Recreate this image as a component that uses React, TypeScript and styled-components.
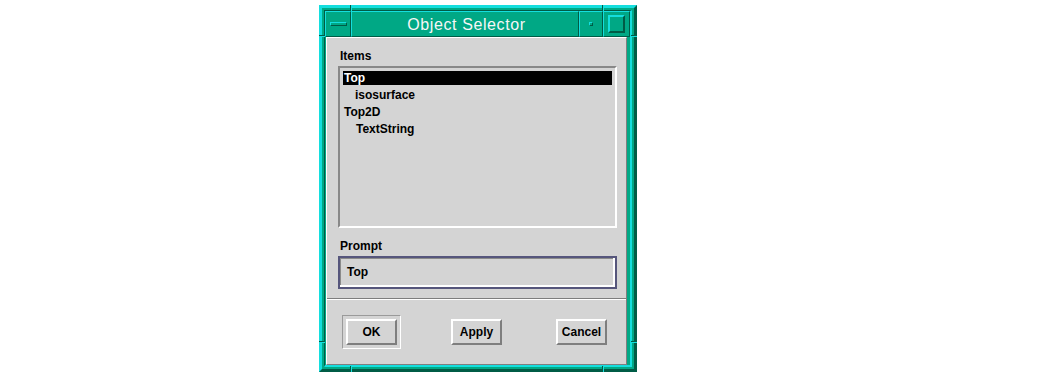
import { createGlobalStyle, styled } from "styled-components";

const TEAL = "#00a885";
const LIGHT = "#14dede";
const DARK = "#005c46";
const GREY = "#d4d4d4";
const SHADOW = "#7e7e7e";

const GlobalStyle = createGlobalStyle`
  html, body {
    margin: 0;
    background: #ffffff;
  }
  body {
    font-family: "Liberation Sans", Arial, sans-serif;
  }
`;

const Page = styled.div`
  height: 376px;
  box-sizing: border-box;
  padding: 5px 0 0 319px;
`;

// mwm style window frame
const Frame = styled.div`
  position: relative;
  width: 318px;
  height: 367px;
  box-sizing: border-box;
  display: flex;
  padding: 2px;
  background: ${TEAL};
  border: 3px solid;
  border-color: ${LIGHT} ${DARK} ${DARK} ${LIGHT};
`;

const Tick = styled.span<{ $side: "top" | "bottom" | "left" | "right"; $at: number }>`
  position: absolute;
  box-sizing: border-box;
  ${({ $side, $at }) =>
    $side === "top" || $side === "bottom"
      ? `
    ${$side}: -3px;
    left: ${$at - 3}px;
    width: 2px;
    height: 6px;
    border-left: 1px solid ${DARK};
    border-right: 1px solid ${LIGHT};
  `
      : `
    ${$side}: -3px;
    top: ${$at - 3}px;
    width: 6px;
    height: 2px;
    border-top: 1px solid ${DARK};
    border-bottom: 1px solid ${LIGHT};
  `}
`;

const Inner = styled.div`
  flex: 1;
  display: flex;
  flex-direction: column;
  border-style: solid;
  border-width: 1px 2px 2px 1px;
  border-color: ${DARK} ${LIGHT} ${LIGHT} ${DARK};
`;

const TitleBar = styled.div`
  height: 26px;
  flex: none;
  display: flex;
`;

const Segment = styled.div<{ $w?: number }>`
  ${({ $w }) => ($w ? `width: ${$w}px; flex: none;` : "flex: 1;")}
  box-sizing: border-box;
  display: flex;
  align-items: center;
  justify-content: center;
  border: 1px solid;
  border-color: ${LIGHT} ${DARK} ${DARK} ${LIGHT};
`;

const Title = styled.span`
  color: #f6f6f6;
  font-family: "Liberation Sans", Arial, sans-serif;
  font-size: 16px;
  letter-spacing: 0.6px;
  line-height: 20px;
  padding: 1px 0 0 3px;
`;

const MenuBar = styled.span`
  width: 17px;
  height: 4px;
  box-sizing: border-box;
  border: 1px solid;
  border-color: ${LIGHT} ${DARK} ${DARK} ${LIGHT};
`;

const Dot = styled.span`
  width: 4px;
  height: 4px;
  box-sizing: border-box;
  border: 1px solid;
  border-color: ${LIGHT} ${DARK} ${DARK} ${LIGHT};
`;

const MaxSquare = styled.span`
  width: 17px;
  height: 18px;
  box-sizing: border-box;
  border: 2px solid;
  border-color: ${LIGHT} ${DARK} ${DARK} ${LIGHT};
`;

const Client = styled.div`
  flex: 1;
  display: flex;
  flex-direction: column;
  margin: 0 3px 0 1px;
  background: ${GREY};
  border: 1px solid;
  border-color: #ffffff ${SHADOW} ${SHADOW} #ffffff;
`;

const Body = styled.div`
  display: flex;
  flex-direction: column;
  padding: 11px 9px 0 11px;
`;

const Label = styled.div<{ $gapTop?: number }>`
  margin-top: ${({ $gapTop }) => $gapTop ?? 0}px;
  margin-bottom: 3px;
  padding-left: 2px;
  font-size: 12px;
  font-weight: 700;
  line-height: 14px;
  color: #000;
`;

const List = styled.div`
  height: 162px;
  box-sizing: border-box;
  padding: 3px;
  border: 2px solid;
  border-color: #888888 #ffffff #ffffff #888888;
`;

const Row = styled.div<{ $indent: number; $selected?: boolean }>`
  height: 14px;
  margin-bottom: 3px;
  padding-left: ${({ $indent }) => $indent + 1}px;
  font-size: 12px;
  font-weight: 700;
  line-height: 14px;
  color: ${({ $selected }) => ($selected ? "#ffffff" : "#000000")};
  background: ${({ $selected }) => ($selected ? "#000000" : "transparent")};
`;

const Field = styled.div`
  height: 33px;
  box-sizing: border-box;
  display: flex;
  align-items: center;
  padding: 0 0 1px 7px;
  border: 2px solid #56567c;
  box-shadow: inset -2px -2px 0 #ffffff, inset 1px 1px 0 #8a8a8a;
  font-size: 12px;
  font-weight: 700;
  color: #000;
`;

const Separator = styled.div`
  margin-top: 9px;
  border-top: 1px solid ${SHADOW};
  border-bottom: 1px solid #ffffff;
`;

const ButtonRow = styled.div`
  flex: 1;
  display: flex;
  align-items: center;
  padding: 0 0 0 15px;
`;

const DefaultRing = styled.div`
  padding: 3px;
  border: 1px solid;
  border-color: #9a9a9a #ffffff #ffffff #9a9a9a;
`;

const Button = styled.button<{ $offset?: number }>`
  display: block;
  width: 51px;
  height: 26px;
  box-sizing: border-box;
  margin-left: ${({ $offset }) => $offset ?? 0}px;
  padding: 0;
  background: ${GREY};
  border: 2px solid;
  border-color: #ffffff ${SHADOW} ${SHADOW} #ffffff;
  font-family: "Liberation Sans", Arial, sans-serif;
  font-size: 12px;
  font-weight: 700;
  color: #000;
`;

const items = [
  { name: "Top", indent: 0 },
  { name: "isosurface", indent: 11 },
  { name: "Top2D", indent: 0 },
  { name: "TextString", indent: 12 },
];

export default function App() {
  return (
    <Page>
      <GlobalStyle />
      <Frame>
        <Tick $side="top" $at={31} />
        <Tick $side="top" $at={283} />
        <Tick $side="bottom" $at={31} />
        <Tick $side="bottom" $at={283} />
        <Tick $side="left" $at={30} />
        <Tick $side="left" $at={336} />
        <Tick $side="right" $at={30} />
        <Tick $side="right" $at={336} />
        <Inner>
          <TitleBar>
            <Segment $w={26}>
              <MenuBar />
            </Segment>
            <Segment>
              <Title>Object Selector</Title>
            </Segment>
            <Segment $w={24}>
              <Dot />
            </Segment>
            <Segment $w={27}>
              <MaxSquare />
            </Segment>
          </TitleBar>
          <Client>
            <Body>
              <Label>Items</Label>
              <List>
                {items.map((it, i) => (
                  <Row key={it.name} $indent={it.indent} $selected={i === 0}>
                    {it.name}
                  </Row>
                ))}
              </List>
              <Label $gapTop={11}>Prompt</Label>
              <Field>Top</Field>
            </Body>
            <Separator />
            <ButtonRow>
              <DefaultRing>
                <Button>OK</Button>
              </DefaultRing>
              <Button $offset={50}>Apply</Button>
              <Button $offset={54}>Cancel</Button>
            </ButtonRow>
          </Client>
        </Inner>
      </Frame>
    </Page>
  );
}
